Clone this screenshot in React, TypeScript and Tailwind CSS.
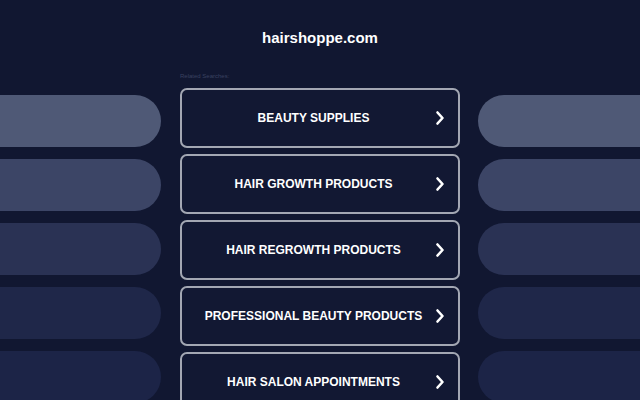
const items = [
  "BEAUTY SUPPLIES",
  "HAIR GROWTH PRODUCTS",
  "HAIR REGROWTH PRODUCTS",
  "PROFESSIONAL BEAUTY PRODUCTS",
  "HAIR SALON APPOINTMENTS",
];

const pillColors = ["bg-[#4f5976]", "bg-[#3c4566]", "bg-[#2a3254]", "bg-[#1f2749]", "bg-[#1c2447]"];

function Chevron() {
  return (
    <svg width="10" height="15" viewBox="0 0 10 15" fill="none">
      <path d="M2.5 2 L7.5 7.5 L2.5 13" stroke="white" strokeWidth="2.6" strokeLinecap="round" strokeLinejoin="round" />
    </svg>
  );
}

export default function App() {
  return (
    <div
      className="h-[400px] w-[640px] overflow-hidden bg-[#111731] text-white"
      style={{ fontFamily: '"Liberation Sans", Arial, sans-serif' }}
    >
      <div className="pt-[29px] text-center text-[15px] font-bold leading-[18px]">hairshoppe.com</div>
      <div className="grid grid-cols-[161px_280px_1fr] pt-[25px]">
        <div className="flex flex-col gap-[12px] pt-[23px]">
          {pillColors.map((c, i) => (
            <div key={i} className={`h-[52px] rounded-r-[26px] ${c}`} />
          ))}
        </div>
        <div className="ml-[19px] flex w-[280px] flex-col">
          <div className="h-[16px] text-[6px] leading-[8px] text-[#3a4260]">Related Searches:</div>
          <div className="flex flex-col gap-[6px]">
            {items.map((t) => (
              <div
                key={t}
                className="relative flex h-[60px] items-center justify-center rounded-[7px] border-2 border-[#a3a7b3] bg-[#121833]"
              >
                <span className="pr-[13px] text-[12px] font-bold">{t}</span>
                <div className="absolute right-[13px] top-1/2 -translate-y-1/2">
                  <Chevron />
                </div>
              </div>
            ))}
          </div>
        </div>
        <div className="ml-[37px] flex flex-col gap-[12px] pt-[23px]">
          {pillColors.map((c, i) => (
            <div key={i} className={`h-[52px] rounded-l-[26px] ${c}`} />
          ))}
        </div>
      </div>
    </div>
  );
}
